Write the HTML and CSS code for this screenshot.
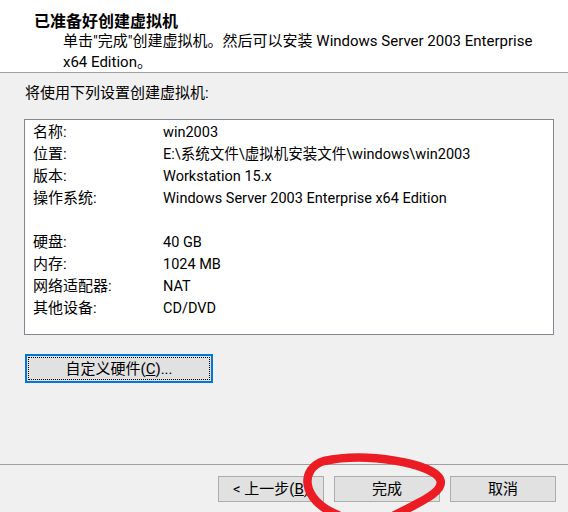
FILE: index.html
```html
<!DOCTYPE html>
<html lang="zh-CN">
<head>
<meta charset="utf-8">
<title>新建虚拟机向导</title>
<link rel="stylesheet" href="styles.css">
</head>
<body>
<div class="wizard">
  <div class="header">
    <div class="title">已准备好创建虚拟机</div>
    <div class="desc">单击"完成"创建虚拟机。然后可以安装 Windows Server 2003 Enterprise<br>x64 Edition。</div>
  </div>
  <div class="main">
    <div class="intro">将使用下列设置创建虚拟机:</div>
    <div class="summary">
      <div class="row"><span class="label">名称:</span><span class="value">win2003</span></div>
      <div class="row"><span class="label">位置:</span><span class="value">E:\系统文件\虚拟机安装文件\windows\win2003</span></div>
      <div class="row"><span class="label">版本:</span><span class="value">Workstation 15.x</span></div>
      <div class="row"><span class="label">操作系统:</span><span class="value">Windows Server 2003 Enterprise x64 Edition</span></div>
      <div class="row blank"></div>
      <div class="row"><span class="label">硬盘:</span><span class="value">40 GB</span></div>
      <div class="row"><span class="label">内存:</span><span class="value">1024 MB</span></div>
      <div class="row"><span class="label">网络适配器:</span><span class="value">NAT</span></div>
      <div class="row"><span class="label">其他设备:</span><span class="value">CD/DVD</span></div>
    </div>
    <button class="btn custom"><span class="focus">自定义硬件(<u>C</u>)...</span></button>
  </div>
  <div class="footer">
    <button class="btn nav">&lt; 上一步(<u>B</u>)</button>
    <button class="btn nav finish">完成</button>
    <button class="btn nav">取消</button>
  </div>
  <svg class="mark" width="568" height="512" viewBox="0 0 568 512" aria-hidden="true">
    <path d="M393 516 C418 503 446 492 440 479 C432 463 366 452 324 461 C300 468 300 500 338 515" fill="none" stroke="#ec1c24" stroke-width="8.5" stroke-linecap="round"/>
  </svg>
</div>
</body>
</html>
```
FILE: styles.css
```css
html, body {
  margin: 0;
  padding: 0;
}
body {
  font-family: "Roboto", "Noto Sans CJK SC", sans-serif;
  font-size: 15px;
  color: #000;
  background: #f0f0f0;
}
.wizard {
  position: relative;
  width: 568px;
  height: 512px;
  display: flex;
  flex-direction: column;
  overflow: hidden;
}
.header {
  height: 72px;
  background: #fff;
  border-bottom: 1px solid #a0a0a0;
  box-sizing: content-box;
  flex: none;
}
.title {
  font-family: "Noto Sans CJK SC", sans-serif;
  font-weight: bold;
  font-size: 16px;
  line-height: 20px;
  padding: 10px 0 0 34px;
}
.desc {
  margin: 1px 0 0 63px;
  line-height: 21px;
}
.main {
  flex: 1;
  padding: 10px 0 0 24px;
  display: flex;
  flex-direction: column;
  align-items: flex-start;
}
.intro {
  line-height: 20px;
  padding-left: 1px;
}
.summary {
  margin-top: 16px;
  width: 528px;
  height: 213px;
  background: #fff;
  border: 1px solid #828790;
  padding-top: 1px;
  box-sizing: content-box;
}
.row {
  display: flex;
  align-items: baseline;
  height: 22px;
  line-height: 22px;
  padding-left: 8px;
}
.label {
  width: 130px;
  flex: none;
}
.value {
  font-size: 14.5px;
}
.btn {
  font: inherit;
  color: #000;
  background: #e1e1e1;
  border: 1px solid #adadad;
  padding: 0;
  margin: 0;
}
.custom {
  margin-top: 19px;
  margin-left: 1px;
  width: 188px;
  height: 29px;
  border: 2px solid #0078d7;
  padding: 1px;
  display: flex;
}
.custom .focus {
  flex: 1;
  border: 1px dotted #000;
  display: flex;
  align-items: center;
  justify-content: center;
  line-height: 20px;
}
.footer {
  flex: none;
  height: 48px;
  border-top: 1px solid #a0a0a0;
  display: flex;
  justify-content: flex-end;
  align-items: flex-start;
  gap: 10px;
  padding: 11px 12px 0 0;
  box-sizing: border-box;
}
.nav {
  width: 106px;
  height: 26px;
  line-height: 24px;
}
.mark {
  position: absolute;
  left: 0;
  top: 0;
  pointer-events: none;
}
```
